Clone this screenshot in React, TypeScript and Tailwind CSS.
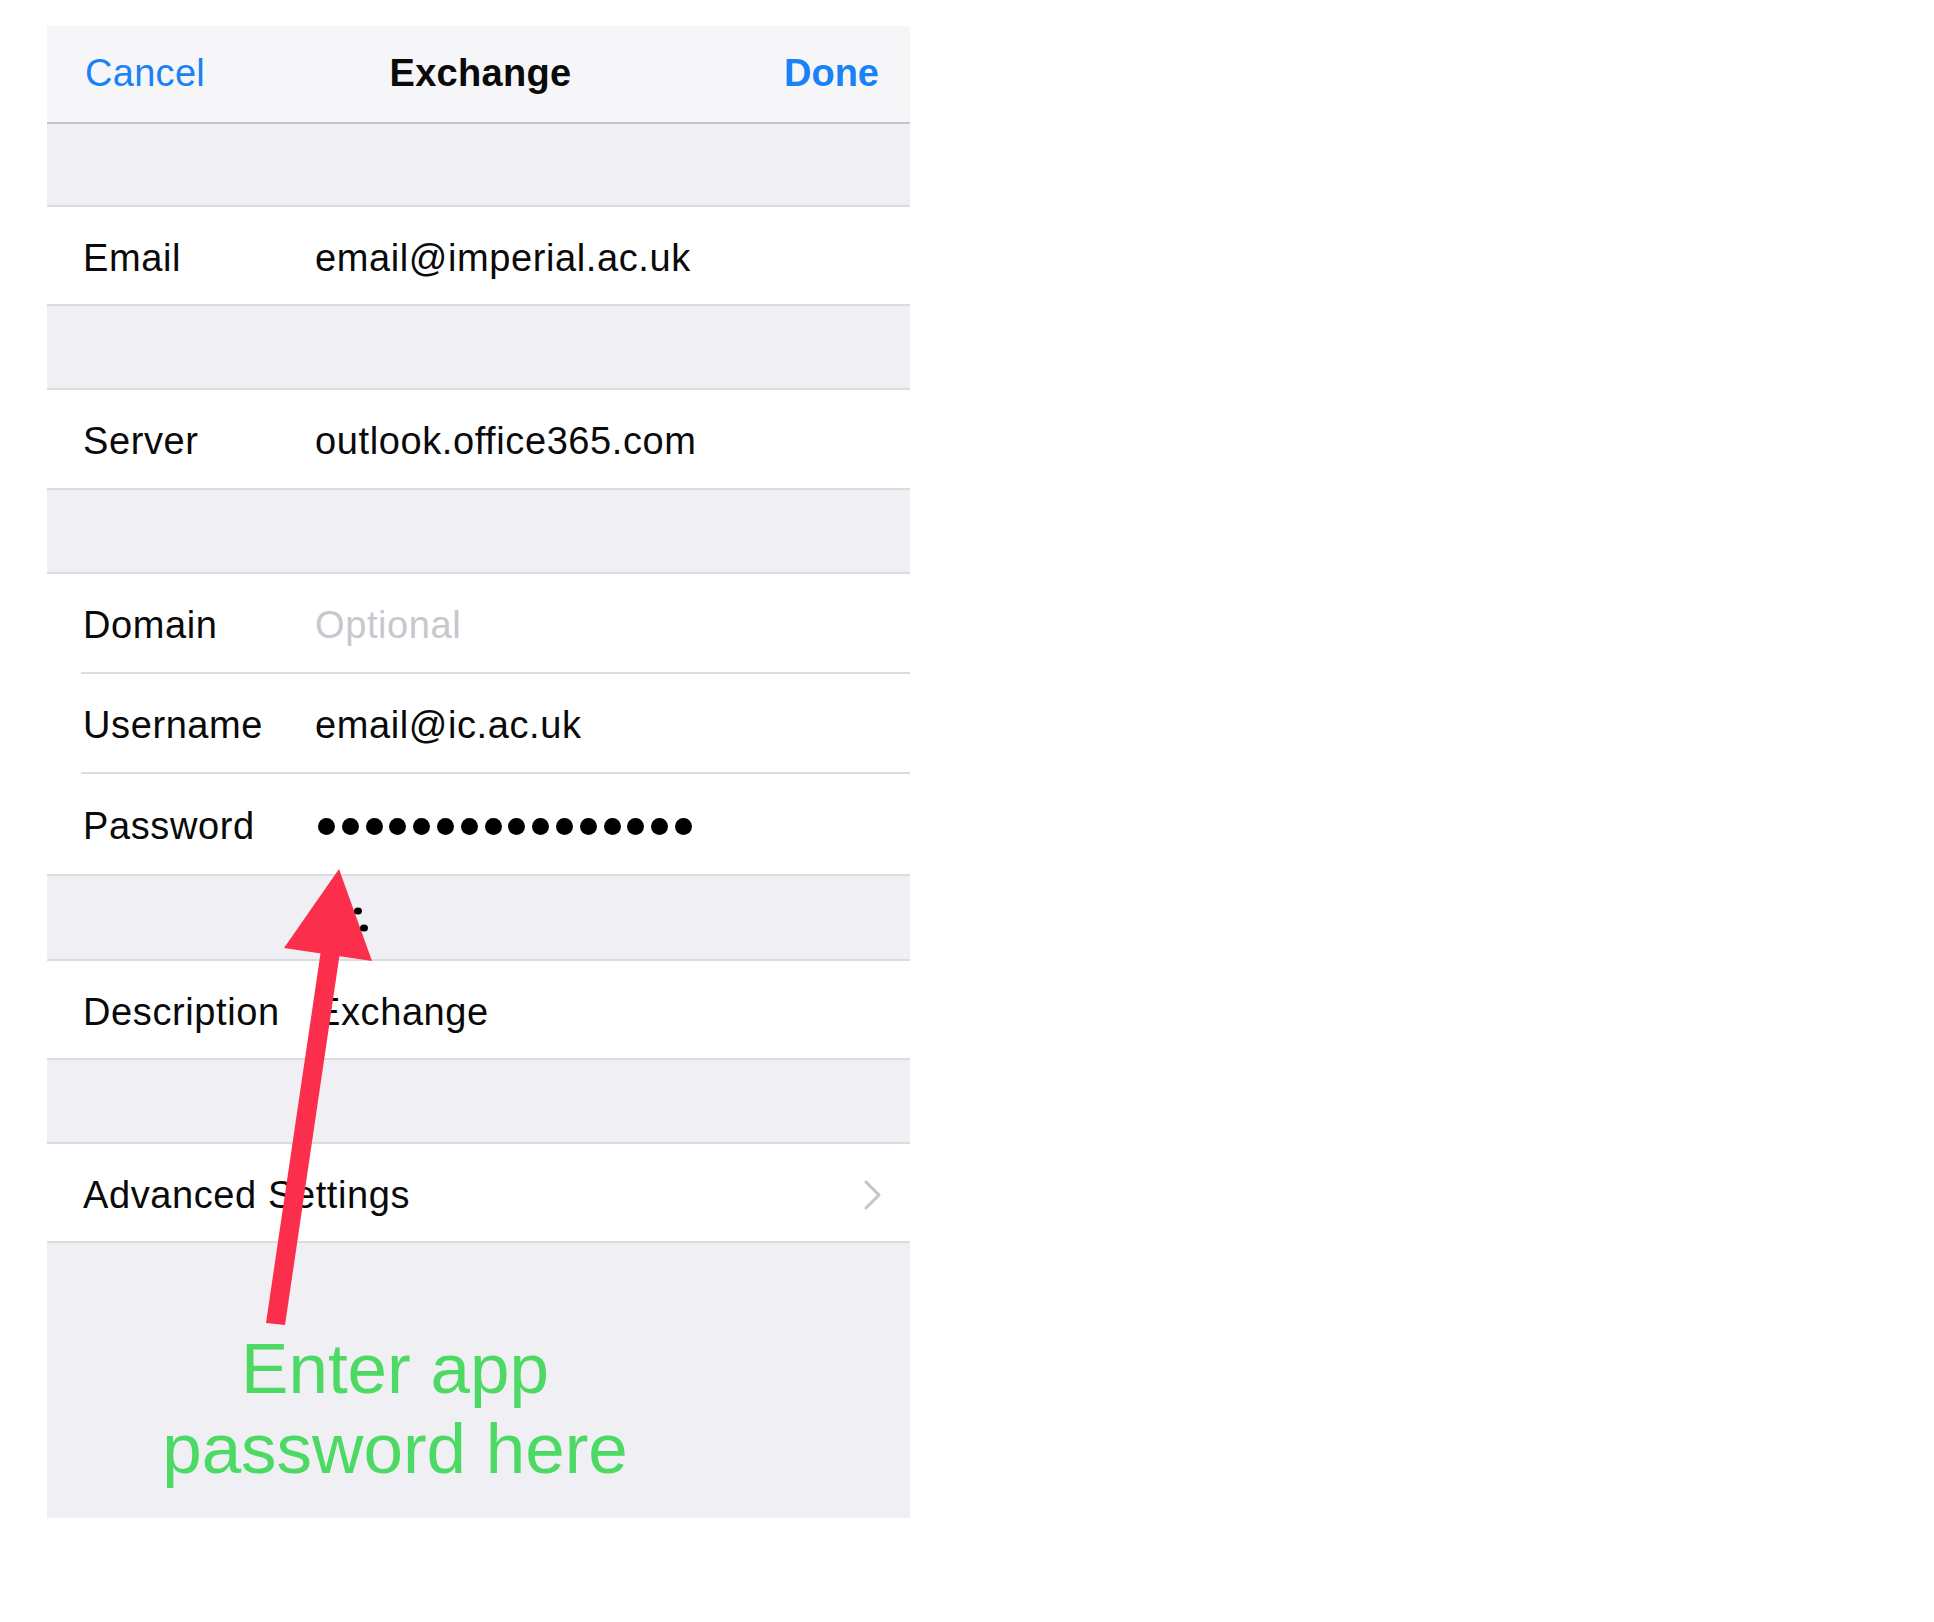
import React from "react";

const font = { fontFamily: '"Liberation Sans", Arial, sans-serif' };

function Gap({ h = "h-[82px]" }: { h?: string }) {
  return <div className={`${h} bg-[#efeff4]`} />;
}

function Row({ label, children, h = "h-[97px]", inset = false, last = true }: { label: string; children?: React.ReactNode; h?: string; inset?: boolean; last?: boolean }) {
  return (
    <div className="bg-white">
      <div className={`flex items-center pt-[5px] ${h} ${inset && !last ? "ml-[34px] pl-[2px]" : "pl-[36px]"} ${!last ? "border-b-2 border-[#dcdce0]" : ""}`}>
        <span className="w-[232px] shrink-0 text-[38px] tracking-[0.6px] text-[#0a0a0a]">{label}</span>
        <div className="flex-1 flex items-center text-[38px] tracking-[0.6px] text-[#0a0a0a]">{children}</div>
      </div>
    </div>
  );
}

function Dots() {
  return (
    <div className="flex gap-[6.8px] pl-[3px]">
      {Array.from({ length: 16 }).map((_, i) => (
        <span key={i} className="w-[17px] h-[17px] rounded-full bg-black" />
      ))}
    </div>
  );
}

export default function App() {
  return (
    <div className="relative w-[1934px] h-[1622px] bg-white" style={font}>
      <div className="w-[863px] ml-[47px] pt-[26px]">
        {/* nav bar */}
        <div className="grid grid-cols-[1fr_auto_1fr] items-center h-[98px] bg-[#f6f6f8] border-b-2 border-[#c4c4c9] px-[31px] pb-[2px]">
          <span className="pl-[7px] text-[38px] tracking-[0.3px] text-[#1a82f7]">Cancel</span>
          <span className="pl-[4px] text-[38px] font-bold tracking-[0.3px] text-[#0a0a0a]">Exchange</span>
          <span className="text-right text-[38px] font-bold text-[#1a82f7]">Done</span>
        </div>

        <Gap h="h-[81px]" />
        <div className="border-y-2 border-[#dcdce0]">
          <Row label="Email">email@imperial.ac.uk</Row>
        </div>
        <Gap />
        <div className="border-y-2 border-[#dcdce0]">
          <Row label="Server" h="h-[98px]">outlook.office365.com</Row>
        </div>
        <Gap />
        <div className="border-y-2 border-[#dcdce0] bg-white">
          <Row label="Domain" h="h-[100px]" inset last={false}>
            <span className="text-[#c7c7cd]">Optional</span>
          </Row>
          <Row label="Username" h="h-[100px]" inset last={false}>email@ic.ac.uk</Row>
          <Row label="Password" h="h-[100px]">
            <Dots />
          </Row>
        </div>
        <Gap h="h-[83px]" />
        <div className="border-y-2 border-[#dcdce0]">
          <Row label="Description">Exchange</Row>
        </div>
        <Gap />
        <div className="border-y-2 border-[#dcdce0] bg-white">
          <div className="flex items-center justify-between h-[97px] pt-[5px] pl-[36px] pr-[28px]">
            <span className="text-[38px] tracking-[0.6px] text-[#0a0a0a]">Advanced Settings</span>
            <svg width="18" height="30" viewBox="0 0 18 30" fill="none">
              <path d="M2 2 L15 15 L2 28" stroke="#c4c4c9" strokeWidth="3" strokeLinecap="round" strokeLinejoin="round" />
            </svg>
          </div>
        </div>
        <div className="h-[275px] bg-[#efeff4] pt-[86px]">
          <div className="w-[696px] text-center text-[71px] leading-[80px] text-[#4cd964]">
            Enter app
            <br />
            password here
          </div>
        </div>
      </div>

      {/* annotation arrow */}
      <svg className="absolute left-0 top-0 pointer-events-none" width="1934" height="1622">
        <polygon points="321,950 340,952 285,1325 266,1323" fill="#fb2f4c" />
        <polygon points="339,869 284,948 372,961" fill="#fb2f4c" />
        <ellipse cx="358" cy="911" rx="4" ry="3.5" fill="#000" />
        <ellipse cx="364" cy="928" rx="4" ry="3.5" fill="#000" />
      </svg>
    </div>
  );
}
